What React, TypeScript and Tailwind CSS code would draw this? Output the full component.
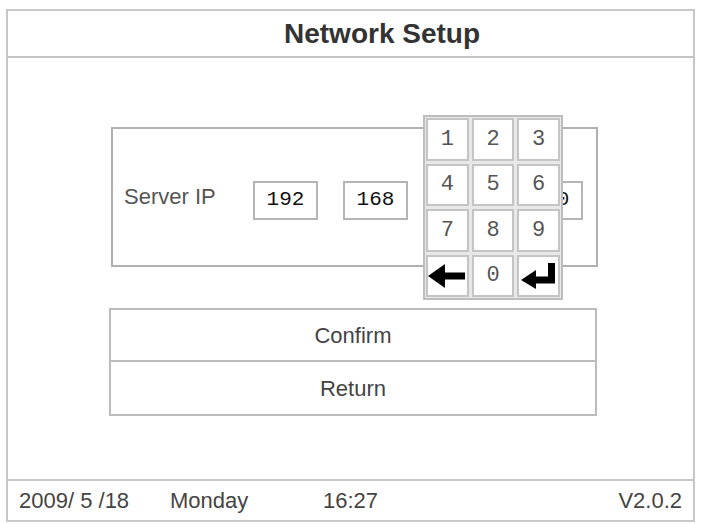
import React from 'react';

const KEYS = ['1', '2', '3', '4', '5', '6', '7', '8', '9', 'back', '0', 'enter'];

function BackIcon() {
  return (
    <svg width="38" height="24" viewBox="0 0 38 24">
      <polygon points="0,12 17,0 17,24" fill="#000" />
      <rect x="15" y="8.5" width="22" height="7" fill="#000" />
    </svg>
  );
}

function EnterIcon() {
  return (
    <svg width="36" height="26" viewBox="0 0 36 26">
      <polygon points="0,17 15,7 15,26" fill="#000" />
      <path d="M13 13.5 H27 V0 H34 V20.5 H13 Z" fill="#000" />
    </svg>
  );
}

function Keypad() {
  return (
    <div className="absolute left-[415px] top-[57px] grid h-[185px] w-[140px] grid-cols-3 grid-rows-4 gap-[3px] border-2 border-[#bdbdbd] bg-[#e8e8e8] p-[1px]">
      {KEYS.map(key => (
        <div
          key={key}
          className="flex items-center justify-center border-2 border-[#c4c4c4] bg-white font-['Liberation_Mono',monospace] text-[22px] text-[#555]"
        >
          {key === 'back' ? <BackIcon /> : key === 'enter' ? <EnterIcon /> : key}
        </div>
      ))}
    </div>
  );
}

function IpBox({ value, className }: { value: string; className?: string }) {
  return (
    <div
      className={`flex h-[39px] w-[65px] items-center justify-center border-2 border-[#b5b5b5] bg-white font-['Liberation_Mono',monospace] text-[21px] text-[#111] ${className ?? ''}`}
    >
      {value}
    </div>
  );
}

export default function App() {
  return (
    <div className="h-[524px] w-[701px] overflow-hidden bg-white pt-[9px] font-['Liberation_Sans',Arial,sans-serif]">
      <div className="ml-[6px] flex h-[513px] w-[689px] flex-col border-2 border-[#c8c8c8]">
        <div className="flex h-[47px] shrink-0 items-center justify-center border-b-2 border-[#c4c4c4] pl-[63px]">
          <h1 className="text-[28px] font-bold text-[#333]">Network Setup</h1>
        </div>

        <div className="relative flex-1">
          <div className="ml-[103px] mt-[69px] flex h-[140px] w-[487px] items-center border-2 border-[#b0b0b0] pl-[11px] pt-[6px]">
            <span className="w-[129px] pb-[8px] text-[22px] text-[#555]">Server IP</span>
            <IpBox value="192" />
            <IpBox value="168" className="ml-[25px]" />
            <IpBox value="1" className="ml-[25px]" />
            <IpBox value="100" className="ml-[20px]" />
          </div>

          <div className="ml-[101px] mt-[41px] flex w-[488px] flex-col border-2 border-[#bcbcbc] text-[22px] text-[#444]">
            <button className="flex h-[52px] items-center justify-center border-b-2 border-[#bcbcbc]">Confirm</button>
            <button className="flex h-[52px] items-center justify-center">Return</button>
          </div>

          <Keypad />
        </div>

        <div className="flex h-[41px] shrink-0 items-center border-t-2 border-[#c8c8c8] pl-[11px] pr-[11px] text-[22px] text-[#444]">
          <span className="w-[151px]">2009/ 5 /18</span>
          <span className="w-[153px]">Monday</span>
          <span>16:27</span>
          <span className="ml-auto">V2.0.2</span>
        </div>
      </div>
    </div>
  );
}
